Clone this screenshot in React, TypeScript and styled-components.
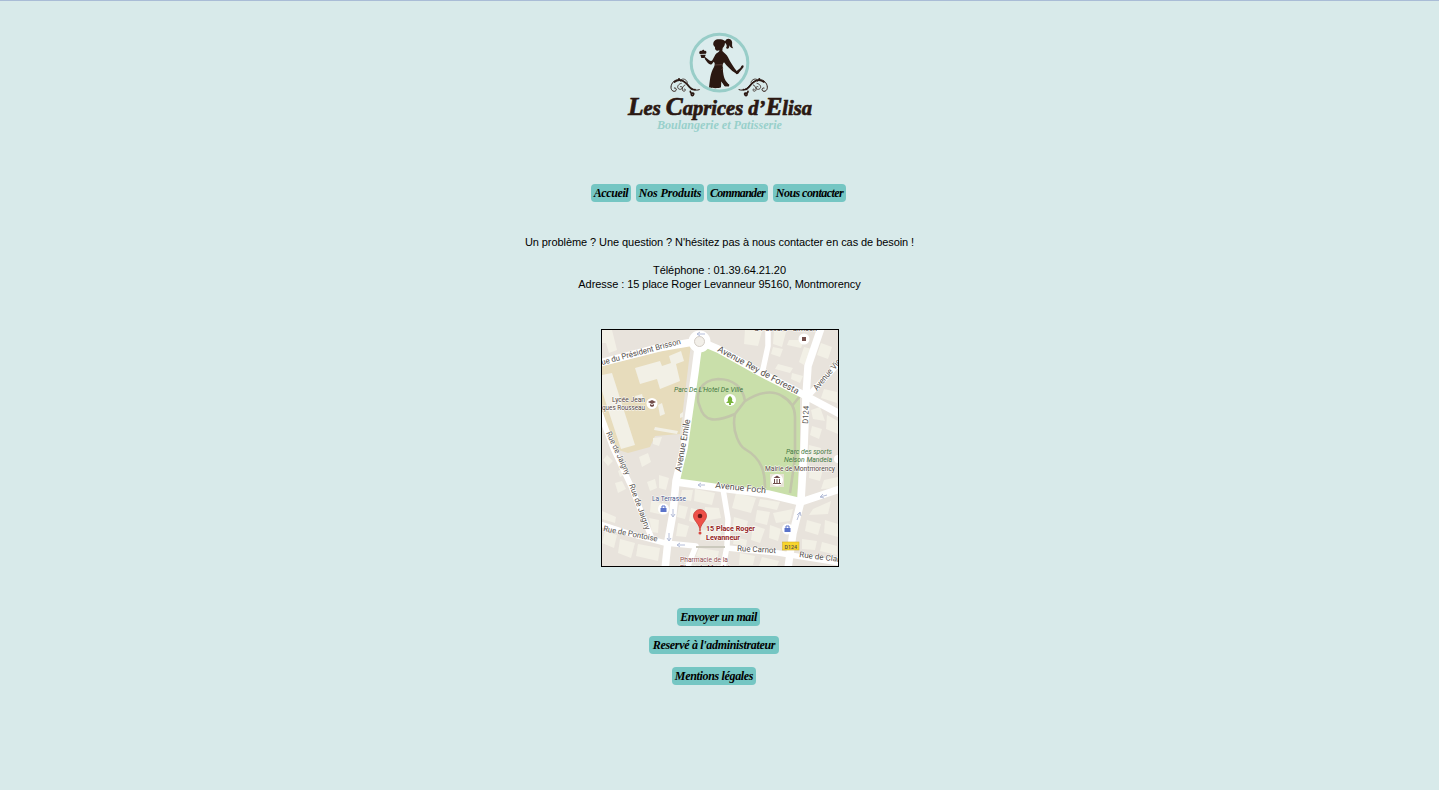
import React from 'react';
import styled, { createGlobalStyle } from 'styled-components';

const GlobalStyle = createGlobalStyle`
  * { box-sizing: border-box; }
  html, body { margin: 0; padding: 0; background: #d8eaea; }
  body { overflow: hidden; }
`;

const Page = styled.main`
  height: 790px;
  border-top: 1px solid #a9bcd6;
  display: flex;
  flex-direction: column;
  align-items: center;
  color: #000;
  font-family: Arial, 'Liberation Sans', sans-serif;
  font-size: 11px;
  line-height: 14px;
`;

const Logo = styled.svg`
  display: block;
  width: 200px;
  height: 112px;
  margin-top: 27px;
  flex: none;
  overflow: visible;
`;

const Nav = styled.nav`
  display: flex;
  width: 257px;
  margin-top: 44px;
`;

const Button = styled.a<{ $width: number; $gap?: number; $spacing?: number }>`
  display: flex;
  justify-content: center;
  flex: none;
  width: ${p => p.$width}px;
  height: 18px;
  margin-right: ${p => p.$gap ?? 0}px;
  border-radius: 4px;
  background: #75c6c3;
  color: #000;
  text-decoration: none;
  white-space: nowrap;
  font: italic bold 12px/19px 'Brush Script MT', 'Brush Script Std', 'Liberation Serif', cursive;
  letter-spacing: ${p => p.$spacing ?? 0}px;
`;

const Intro = styled.p`
  display: flex;
  justify-content: center;
  margin: 33px 0 0;
  width: 389px;
  white-space: nowrap;
  letter-spacing: -0.07px;
`;

const Contact = styled.address`
  margin-top: 14px;
  font-style: normal;
  text-align: center;
  white-space: nowrap;
  letter-spacing: -0.06px;
`;

const MapFrame = styled.figure`
  margin: 38px 0 0;
  width: 238px;
  height: 238px;
  border: 1px solid #000;
  flex: none;

  svg { display: block; }
`;

const Actions = styled.div`
  display: flex;
  flex-direction: column;
  align-items: center;
  width: 130px;
  margin: 41px 11px 0 0;
`;

const Action = styled.div<{ $top?: number; $shift?: number }>`
  margin-top: ${p => p.$top ?? 0}px;
  padding-left: ${p => p.$shift ?? 0}px;
`;

const Flourish = () => (
  <g fill="none" stroke="#2b1812" strokeLinecap="round">
    <path d="M118 185 C104 190 94 182 84 170 C72 155 48 149 38 164 C29 176 33 190 43 190 C52 189 50 178 43 180" strokeWidth="3" />
    <path d="M43 162 C62 148 78 163 88 177 C94 185 100 186 105 185" strokeWidth="5" />
    <path d="M64 166 C48 170 51 185 62 184 C70 182 67 173 61 176 M75 171 C63 176 65 193 74 189 C79 186 75 181 72 184 M82 163 C78 149 60 151 62 160" strokeWidth="2.4" />
    <path d="M91 190 C91 201 103 190 101 199 C99 205 93 204 94 198" strokeWidth="5" />
    <circle cx="57" cy="153" r="3" fill="#2b1812" stroke="none" />
  </g>
);

const BakeryLogo = () => (
  <Logo viewBox="0 0 200 112" role="img" aria-label="Les Caprices d'Elisa">
    <g transform="translate(40 0) scale(.33333)">
      <circle cx="178.500" cy="104" r="85" fill="#dceced" stroke="#98cdc8" strokeWidth="9" />
      <g fill="#2b1812">
        <path d="M160 51 C158 37 169 32 182 34 C188 34 193 37 195 40 C200 29 211 31 215 38 C219 46 213 51 220 61 C212 61 211 57 208 52 C209 61 203 65 198 60 C202 55 200 48 195 44 C195 53 190 57 188 60 L187 69 C193 75 201 80 204 88 C211 102 221 119 230 129 L241 120 L244 114 C250 108 254 116 248 121 L238 133 C235 139 229 141 227 136 C213 128 201 114 192 103 C187 107 188 115 188 120 C187 136 188 151 199 165 L208 170 L207 175 L195 175 L184 160 L183 178 C174 182 156 181 147 178 C150 158 150 136 162 117 C166 107 164 104 161 101 L156 108 C149 113 143 105 135 94 L133 85 L138 89 L144 94 C149 99 154 101 157 97 L166 80 C171 73 180 72 178 67 C170 70 164 67 165 58 Z" />
        <path d="M184 112 L188 118 C190 140 190 154 207 170 V175 H194 L184 160Z" />
        <path d="M118 75 C117 68 123 68 126 68 C128 63 133 65 133 69 C139 67 141 73 138 77 L119 78 Z M121 80 H137 L134 90 H124 Z" />
      </g>
      <path d="M163 111 L188 110 M190 120 L184 126" stroke="#92756d" strokeWidth="1.2" fill="none" />
      <Flourish />
      <g transform="translate(355 0) scale(-1 1)"><Flourish /></g>
    </g>
    <g fontFamily="'Brush Script MT', 'Liberation Serif', cursive" fontStyle="italic" fontWeight="700">
      <text x="8" y="87" fontSize="21" fill="#2b1812" stroke="#2b1812" strokeWidth=".7" textLength="184" lengthAdjust="spacingAndGlyphs">
        <tspan fontSize="26">L</tspan>es <tspan fontSize="26">C</tspan>aprices d’<tspan fontSize="26">E</tspan>lisa
      </text>
      <text x="37" y="100.500" fontSize="13" fill="#98d0cb" textLength="125" lengthAdjust="spacingAndGlyphs">Boulangerie et Patisserie</text>
    </g>
  </Logo>
);

const Buildings = () => (
  <g fill="#f2f0e6">
    <path d="M33 38 L58 31 L60 36 L69 33 L67 26 L79 21 L82 31 L74 34 L78 51 L58 59 L55 49 L38 54Z" />
    <path d="M0 45 L10 43 L33 115 L19 119 L0 61Z M56 75 L60 73 L63 84 L58 86Z M53 97 L76 101 L75 104 L52 100Z M78 84 L81 82 L81 87 L78 88Z" />
    <path d="M0 0 H10 L15 20 L7 23 L4 13 H0Z M33 66 L40 64 L42 71 L35 73Z" />
    <path d="M51 108 L60 107 L57 116 L51 114Z M57 145 L67 148 L64 160 L57 158Z M37 127 L46 123 L49 132 L40 137Z M45 152 L53 149 L55 158 L48 161Z M13 153 L20 151 L24 159 L16 163Z M5 125 L11 131 L6 136 L1 130Z M16 141 L22 137 L25 144 L18 147Z" />
    <path d="M0 181 L14 187 L13 193 L0 189Z M3 201 L15 205 L12 218 L0 213Z M18 209 L33 213 L29 228 L16 223Z M36 214 L58 218 L56 231 L34 226Z M49 171 L64 174 L61 185 L48 182Z M47 188 L57 190 L56 203 L50 202Z" />
    <path d="M80 160 L91 160 L89 171 L78 169Z M93 159 L113 163 L110 175 L92 171Z M77 175 L86 177 L83 189 L75 187Z M89 178 L97 180 L94 193 L87 191Z M76 193 L87 196 L84 207 L74 206Z M103 177 L117 178 L119 188 L102 191Z M99 200 L119 199 V210 H98Z M97 218 L117 221 L115 231 L94 226Z" />
    <path d="M134 163 L154 168 L149 183 L130 178Z M158 169 L178 172 L175 180 L156 176Z M155 180 L168 182 L165 195 L153 192Z M171 183 L191 179 L188 191 L174 193Z M132 187 L146 191 L143 204 L130 201Z M151 195 L163 199 L158 213 L149 210Z M168 195 L179 199 L176 211 L167 208Z M132 207 L145 210 L144 216 L131 214Z M138 223 L153 226 L151 235 H137Z M160 227 L177 231 L175 236 H157Z" />
    <path d="M143 0 L160 1 L156 16 L142 14Z M172 0 L184 2 L180 17 L171 14Z M171 17 L181 19 L178 27 L169 24Z M176 34 L191 38 L188 43 L173 39Z M190 43 L201 46 L198 53 L189 49Z M202 17 L210 19 L202 35 L197 32Z M187 10 L202 10 L199 18 L185 15Z M219 13 L230 17 L226 29 L215 25Z M222 59 L235 62 V73 L219 68Z M209 80 L218 77 L223 91 L211 89Z M225 85 L236 91 V104 L224 99Z M210 96 L220 99 L217 109 L208 105Z" />
    <path d="M207 115 L219 118 L216 131 L206 128Z M208 136 L221 139 L218 151 L207 148Z M222 150 L236 147 V158 L219 159Z M211 179 L229 171 L226 184 L207 185Z M205 190 L219 194 L216 205 L203 201Z M223 190 L236 194 V207 L222 203Z M200 209 L215 211 L213 220 L200 219Z M220 212 L235 216 V225 L218 221Z" />
  </g>
);

const roads = [
  'M97 11 L93 42 L82 118 L74 151 L71 183 L66 211 L63 239',
  'M-2 33 L56 18 L97 11 L116 19 L159 43 L204 66 L238 84',
  'M219 -2 L206 36 L204 66 L202 118 L199 171 L191 203 L186 238',
  'M74 152 L118 158 L166 164 L199 172 L238 159',
];
const lanes = [
  'M206 66 L238 32', 'M166 -2 L166 16 L160 44',
  'M-2 83 L11 118 L29 156 L50 209', 'M-2 194 L29 204 L63 213 L94 216 L85 238',
  'M121 159 L126 189 L125 216 L121 238', 'M125 218 L176 223 L238 233',
];

const Label = (props: React.SVGProps<SVGTextElement>) => (
  <text lengthAdjust="spacingAndGlyphs" {...props} />
);

const TownMap = () => (
  <svg width="236" height="236" viewBox="0 0 236 236" fontFamily="Roboto, sans-serif" fontSize="7" fill="#55504b">
    <rect width="236" height="236" fill="#e8e3dc" />
    <path d="M0 36 L89 14 L78 104 L53 106 L48 117 L26 123 L13 119 L0 85Z" fill="#e7dcbc" />
    <Buildings />
    <path d="M97 22 L108 16 L198 66 L198 118 L195 169 L78 150 L83 118Z" fill="#c9dfaa" />
    <g fill="none" stroke="#c2c6aa" strokeWidth="2.600">
      <path d="M116 49 C99 50 92 64 98 77 C102 91 112 93 133 84 L143 71 C141 57 131 49 116 49" />
      <path d="M143 71 Q166 57 180 66 Q193 73 193 87 L193 128 L188 163 M198 66 L190 76 M133 84 C129 103 139 117 143 119 C160 129 163 142 163 158" />
    </g>
    <rect x="168" y="144" width="14" height="13" fill="#e7e3d5" />
    <g fill="none" stroke="#fff" strokeLinejoin="round">
      {lanes.map(d => <path key={d} d={d} strokeWidth="5.500" />)}
      {roads.map(d => <path key={d} d={d} strokeWidth="7.500" />)}
    </g>
    <path d="M94 217 H123" stroke="#cbc9bd" strokeWidth="2" />
    <circle cx="97.500" cy="11.500" r="8" fill="#e8e3dc" stroke="#fff" strokeWidth="6" />
    <circle cx="97.500" cy="11.500" r="5" fill="#f2efe9" stroke="#d4cec7" />
    <g stroke="#b4bdd8" strokeWidth="1" fill="none">
      <path d="M95 4 H103 M98 2 L95 4 L98 6 M96 155 H103 M99 153 L96 155 L99 157 M71 179 V187 M69 184 L71 187 L73 184 M67 203 V211 M65 208 L67 211 L69 208 M75 215 H83 M78 213 L75 215 L78 217 M218 167 L225 165 M221 164 L218 167 L222 168 M195 190 L198 182 M195 185 L198 182 L199 186" />
    </g>
    <g stroke="#fff" strokeWidth="1" paintOrder="stroke" strokeLinejoin="round">
      <g fontSize="8">
        <Label transform="translate(0 35) rotate(-15)" textLength="82">ue du Président Brisson</Label>
        <Label transform="translate(115 21) rotate(28.500)" fontSize="9" textLength="91">Avenue Rey de Foresta</Label>
        <Label transform="translate(215 61) rotate(-50)" fontSize="8.500" textLength="38">Avenue Vic</Label>
        <Label transform="translate(206 94) rotate(-87)" textLength="18">D124</Label>
        <Label transform="translate(79 142) rotate(-80)" fontSize="9" textLength="53">Avenue Emile</Label>
        <Label transform="translate(4 103) rotate(65)" textLength="47">Rue de Jaigny</Label>
        <Label transform="translate(27 155) rotate(70)" textLength="48">Rue de Jaigny</Label>
        <Label transform="translate(1 201) rotate(11)" textLength="55">Rue de Pontoise</Label>
        <Label transform="translate(113 158) rotate(6)" fontSize="9" textLength="51">Avenue Foch</Label>
        <Label transform="translate(135 221) rotate(3)" textLength="39">Rue Carnot</Label>
        <Label transform="translate(197 227) rotate(7)" textLength="40">Rue de Clai</Label>
      </g>
      <Label x="10" y="71.500" fill="#514139" textLength="33">Lycée Jean</Label>
      <Label x="0" y="79.500" fill="#514139" textLength="43">ques Rousseau</Label>
      <Label x="50" y="170.500" fill="#48568a" textLength="34">La Terrasse</Label>
      <Label x="163" y="141" fill="#514139" textLength="70">Mairie de Montmorency</Label>
      <Label x="78" y="232" fill="#8c474b" textLength="48">Pharmacie de la</Label>
      <Label x="78" y="240" fill="#8c474b" textLength="50">Place du Marché</Label>
      <Label x="152" y="1" fill="#514139" textLength="63">G Passard - Simeon</Label>
      <g fontWeight="700" fill="#941d23" fontSize="7">
        <Label x="104" y="201" textLength="49">15 Place Roger</Label>
        <Label x="104" y="209.500" textLength="34">Levanneur</Label>
      </g>
    </g>
    <g fontStyle="italic" fill="#437843">
      <Label x="72" y="62" textLength="69">Parc De L'Hotel De Ville</Label>
      <Label x="184" y="124" textLength="46">Parc des sports</Label>
      <Label x="182" y="132" textLength="48">Nelson Mandela</Label>
    </g>
    <g fill="#fff">
      <circle cx="50" cy="73.500" r="5.500" />
      <circle cx="128" cy="70" r="6" />
      <circle cx="202" cy="9" r="5.500" />
      <circle cx="175" cy="150" r="6" />
      <circle cx="61.500" cy="179" r="5.500" />
      <circle cx="185.500" cy="199" r="5.500" />
      <circle cx="236" cy="129" r="4" />
    </g>
    <path d="M46 72 L50 70 L54 72 L50 74Z M48 74 L50 75 L52 74 V76 L50 77 L48 76Z M200 7 H204 V11 H200Z" fill="#75504c" />
    <path d="M128 66 Q131 68 130 71 L132 73 H129 V75 H127 V73 H124 L126 71 Q125 68 128 66Z" fill="#7bb43e" />
    <path d="M171.500 148 L175 145.500 L178.500 148Z M172 149 H173 V153 H172Z M174.500 149 H175.500 V153 H174.500Z M177 149 H178 V153 H177Z M171 153 H179 V154 H171Z" fill="#704c4b" />
    <g fill="#5b73ca">
      <path d="M58.500 178 H64.500 V182 H58.500Z M182.500 198 H188.500 V202 H182.500Z" />
      <path d="M60 178 V176 H63 V178 M184 198 V196 H187 V198" fill="none" stroke="#5b73ca" />
    </g>
    <rect x="180.500" y="212" width="16.500" height="8" fill="#f8d52c" stroke="#cfaf2d" strokeWidth=".6" />
    <Label x="182.500" y="218.500" fontSize="6" fontWeight="500" textLength="12.500">D124</Label>
    <path d="M98 201 C98 194 91.500 191 91.500 186 A6.500 6.500 0 0 1 104.500 186 C104.500 191 98 194 98 201Z" fill="#ee5048" stroke="#c63b35" strokeWidth=".8" />
    <circle cx="98" cy="186" r="2.300" fill="#681818" />
    <circle cx="98" cy="203" r="1.500" fill="#d8453e" />
  </svg>
);

export default function App() {
  return (
    <>
      <GlobalStyle />
      <Page>
        <BakeryLogo />
        <Nav>
          <Button $width={40} $gap={5} $spacing={-0.4}>Accueil</Button>
          <Button $width={68} $gap={3} $spacing={-0.15}>Nos Produits</Button>
          <Button $width={61} $gap={5} $spacing={-0.7}>Commander</Button>
          <Button $width={73} $spacing={-0.55}>Nous contacter</Button>
        </Nav>
        <Intro>Un problème ? Une question ? N'hésitez pas à nous contacter en cas de besoin !</Intro>
        <Contact>
          Téléphone : 01.39.64.21.20<br />
          Adresse : 15 place Roger Levanneur 95160, Montmorency
        </Contact>
        <MapFrame><TownMap /></MapFrame>
        <Actions>
          <Action $shift={9}><Button $width={83} $spacing={-0.4}>Envoyer un mail</Button></Action>
          <Action $top={10}><Button $width={130} $spacing={-0.32}>Reservé à l'administrateur</Button></Action>
          <Action $top={13}><Button $width={84} $spacing={-0.33}>Mentions légales</Button></Action>
        </Actions>
      </Page>
    </>
  );
}
